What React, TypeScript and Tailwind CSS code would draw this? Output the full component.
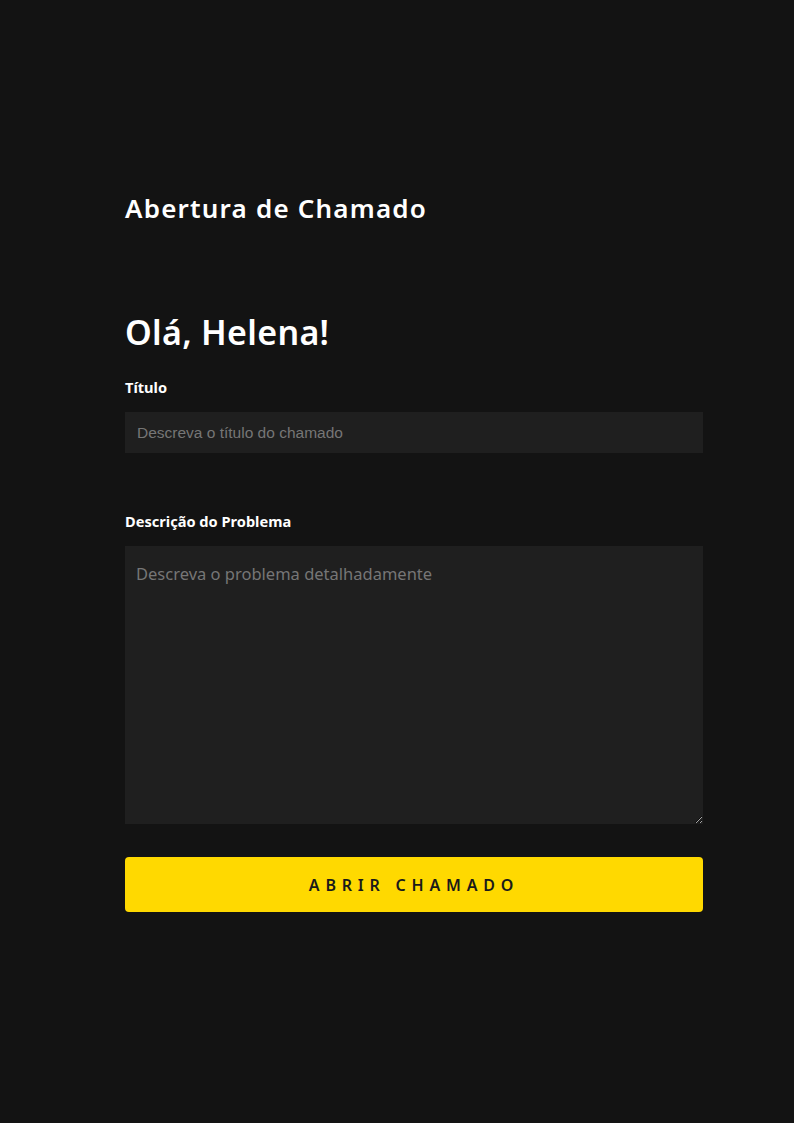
export default function App() {
  return (
    <div className="min-h-[1123px] w-full bg-[#131313] font-['Noto_Sans',sans-serif] text-white">
      <main className="ml-[125px] flex w-[578px] flex-col pt-[190px]">
        <h1 className="text-[26px] font-semibold leading-[36px] tracking-[1.2px]">Abertura de Chamado</h1>
        <h2 className="mt-[86px] text-[34px] font-semibold leading-[40px] tracking-[0.3px]">Olá, Helena!</h2>
        <label className="mt-[25px] block text-[14.6px] font-bold leading-[20px]">Título</label>
        <input
          className="mt-[15px] block h-[41px] w-full bg-[#1f1f1f] px-[12px] font-['Liberation_Sans',Arial,sans-serif] text-[15.5px] text-white outline-none placeholder:text-[#767676]"
          placeholder="Descreva o título do chamado"
        />
        <label className="mt-[58px] block text-[14.6px] font-bold leading-[20px]">Descrição do Problema</label>
        <textarea
          className="mt-[15px] block h-[278px] w-full resize-y bg-[#1f1f1f] px-[11px] pb-[14px] pt-[16px] text-[16.5px] text-white outline-none placeholder:text-[#767676]"
          placeholder="Descreva o problema detalhadamente"
        />
        <button className="mt-[33px] flex h-[55px] w-full items-center justify-center rounded-[4px] bg-[#ffd900] text-[16px] font-semibold tracking-[5.8px] text-[#1a1a1a]">
          ABRIR CHAMADO
        </button>
      </main>
    </div>
  );
}
